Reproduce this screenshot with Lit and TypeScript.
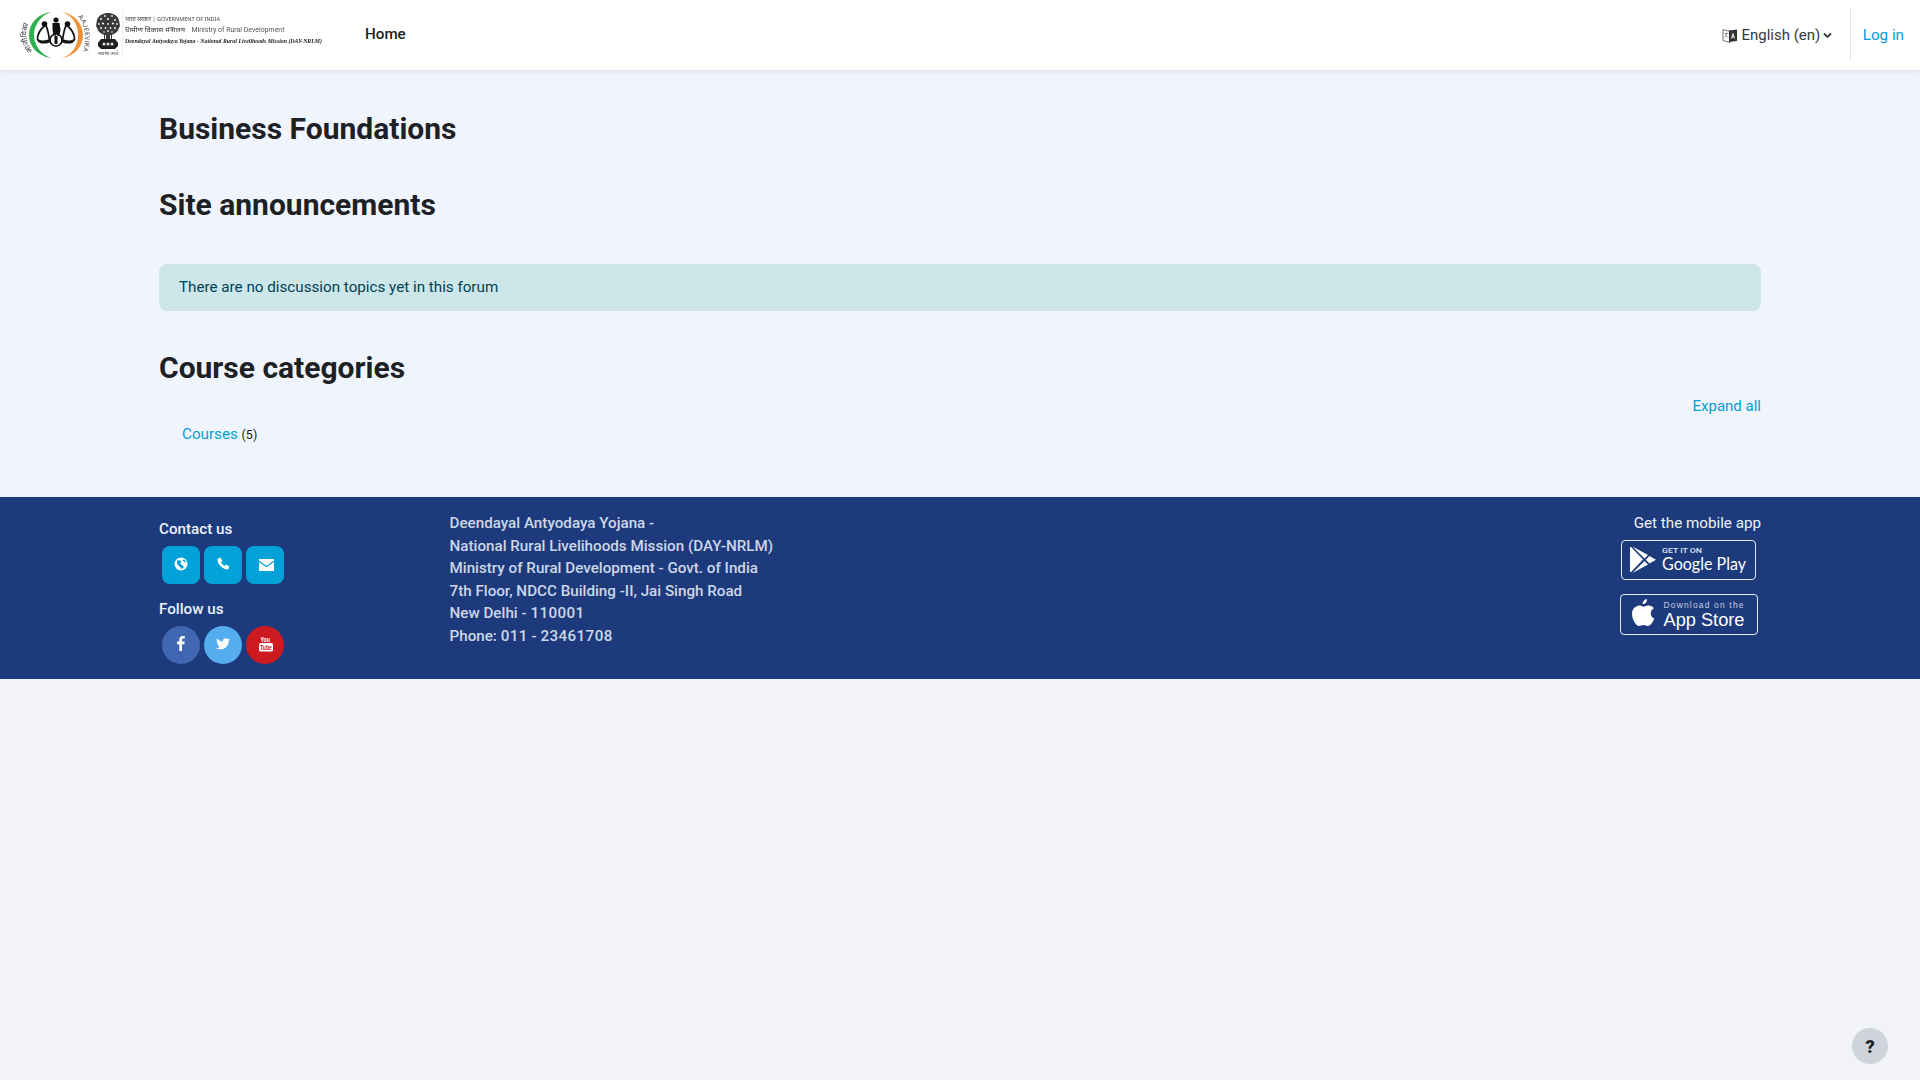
import { LitElement, html, css, svg } from "lit";
import { customElement } from "lit/decorators.js";

const logo = svg`<svg class="logo" width="330" height="70" viewBox="0 0 330 70">
  <defs>
    <path id="la" d="M33 51 C25 43 25 27 32 17" fill="none"/>
    <path id="ra" d="M78 17 C85 24 87 38 83 53" fill="none"/>
  </defs>
  <path d="M51 12 C37 14 29 24 29 35 C29 46 37 56 51 58 C42 55 34 46 34 35 C34 24 42 15 51 12z" fill="#2fb150"/>
  <path d="M62 12 C75 14 83 24 83 35 C83 46 75 56 62 58 C72 55 78 46 78 35 C78 24 72 15 62 12z" fill="#f0913a"/>
  <text font-family="'Noto Sans', Roboto, sans-serif" font-size="7.500" fill="#333"><textPath href="#la">आजीविका</textPath></text>
  <text font-family="Roboto, sans-serif" font-size="6.500" fill="#444" letter-spacing=".3"><textPath href="#ra">AAJEEVIKA</textPath></text>
  <g transform="translate(1.500 0)">
    <g fill="none" stroke="#111" stroke-width="1.700">
      <path d="M44 25c-5 4-8 9-8 14 0 3 6 3 12 1-1-5-1-10-4-15z"/>
      <path d="M65 25c5 4 8 9 8 14 0 3-6 3-12 1 1-5 1-10 4-15z"/>
      <circle cx="54.500" cy="40" r="6"/>
    </g>
    <g fill="#111">
      <circle cx="43" cy="24" r="2.800"/><circle cx="66" cy="24" r="2.800"/><circle cx="54.500" cy="20" r="2.600"/>
      <path d="M51 23h7l1 7-1 5-2 1-1-3-1 3-2-1-1-5z"/>
      <path d="M53 36h3v8h-3z"/>
      <path d="M37 39c3 3 7 3 11 1l1 2c-4 2-10 2-12 0zM72 39c-3 3-7 3-11 1l-1 2c4 2 10 2 12 0z"/>
    </g>
  </g>
  <g>
    <path d="M97 20c2-5 6-7 11-7s9 2 11 7l1 6-3 6-5 3v4h-8v-4l-5-3-3-6z" fill="#3a3a3a"/>
    <g fill="#eee">
      <circle cx="101" cy="19" r="1"/><circle cx="105" cy="16" r=".9"/><circle cx="108" cy="19" r="1.100"/><circle cx="112" cy="16" r=".9"/><circle cx="115" cy="20" r="1"/>
      <circle cx="99" cy="24" r=".9"/><circle cx="103" cy="23.500" r="1.100"/><circle cx="108" cy="24" r=".9"/><circle cx="113" cy="23.500" r="1.100"/><circle cx="117" cy="24" r=".9"/>
      <circle cx="101" cy="28" r="1"/><circle cx="105.500" cy="28" r=".9"/><circle cx="110.500" cy="28" r=".9"/><circle cx="115" cy="28" r="1"/><circle cx="108" cy="31" r="1"/><circle cx="104" cy="32" r=".8"/><circle cx="112" cy="32" r=".8"/>
      <path d="M105 35h1v4h-1zM110 35h1v4h-1z"/>
    </g>
    <path d="M101 39h14l3 4v3l-3 3H101l-3-3v-3z" fill="#1f1f1f"/>
    <circle cx="104" cy="44" r="1.500" fill="#ddd"/><circle cx="108" cy="44" r="1.500" fill="#ddd"/><circle cx="112" cy="44" r="1.500" fill="#ddd"/>
    <text x="98" y="55" font-family="'Noto Sans', sans-serif" font-size="4" fill="#444" textLength="20">सत्यमेव जयते</text>
  </g>
  <line x1="122.500" y1="10" x2="122.500" y2="58" stroke="#ececec" stroke-width=".8"/>
  <text x="125" y="21" font-family="'Noto Sans', sans-serif" font-size="6" fill="#444" textLength="95" lengthAdjust="spacingAndGlyphs">भारत सरकार | GOVERNMENT OF INDIA</text>
  <text x="125" y="32" font-family="'Noto Sans', sans-serif" font-size="7" fill="#333" textLength="60" lengthAdjust="spacingAndGlyphs">ग्रामीण विकास मंत्रालय</text>
  <text x="191.500" y="32" font-family="Roboto, sans-serif" font-size="7.500" fill="#555" textLength="93" lengthAdjust="spacingAndGlyphs">Ministry of Rural Development</text>
  <text x="125" y="42.500" font-family="'Liberation Serif', serif" font-style="italic" font-weight="700" font-size="7" fill="#222" textLength="197" lengthAdjust="spacingAndGlyphs">Deendayal Antyodaya Yojana - National Rural Livelihoods Mission (DAY-NRLM)</text>
</svg>`;

@customElement("app-root")
export class AppRoot extends LitElement {
  static styles = css`
    :host { display: block; min-height: 1080px; background: #f1f3f7; font-family: Roboto, "Liberation Sans", sans-serif; font-size: 15px; color: #1d2125; }
    a { color: #00a0d6; text-decoration: none; }
    .nav { height: 70px; background: #fff; display: flex; align-items: center; box-shadow: 0 2px 5px rgba(0,0,0,.075); position: relative; }
    .logo { flex: none; filter: blur(.3px); }
    .home { margin-left: 35px; margin-bottom: 2px; font-weight: 500; font-size: 15.2px; color: #1d2125; }
    .spacer { flex: 1; }
    .lang { display: flex; align-items: center; gap: 3px; color: #343a40; font-size: 15px; margin-right: 18px; }
    .divider { width: 1px; height: 52px; background: #dee2e6; }
    .login { margin: 0 16px 0 11.5px; font-size: 15.2px; }
    main { background: #f0f5fd; padding: 0 159px; height: 427px; box-sizing: border-box; display: flow-root; }
    h2 { margin: 0; font-size: 30px; line-height: 36px; font-weight: 700; color: #1d2125; }
    .t1 { margin-top: 41px; }
    .t2 { margin-top: 40px; }
    .alert { margin-top: 41px; height: 47px; box-sizing: border-box; background: #cce6ea; color: #004251; border-radius: 8px; padding: 0 20px 2px; display: flex; align-items: center; font-size: 15.2px; }
    .t3 { margin-top: 39px; }
    .expand { text-align: right; margin-top: 9px; font-size: 15px; line-height: 22px; }
    .course { margin-top: 5px; padding-left: 23px; line-height: 24px; font-size: 15.2px; }
    .course small { font-size: 12.5px; color: #1d2125; }
    footer { height: 182px; background: #1d3b7c; padding: 0 159px; box-sizing: border-box; color: #eef1f7; display: flex; }
    .c1 { width: 290.5px; padding-top: 21px; font-weight: 500; font-size: 15.2px; }
    .c1 .lbl { line-height: 22px; }
    .icons { display: flex; gap: 4px; margin: 6px 0 14px 3px; }
    .ic { width: 38px; height: 38px; border-radius: 8px; background: #00a2d8; display: flex; align-items: center; justify-content: center; padding-bottom: 3px; box-sizing: border-box; }
    .ic.round { border-radius: 50%; }
    .addr { padding-top: 15px; font-weight: 500; font-size: 15.2px; line-height: 22.6px; color: #cdd6e8; }
    .d { letter-spacing: .4px; }
    .app { margin-left: auto; display: flex; flex-direction: column; align-items: flex-end; padding-top: 15px; }
    .app .t { line-height: 22px; font-size: 15.2px; }
    .badge { display: block; }
    .b1 { margin-top: 6px; margin-right: 5px; }
    .b2 { margin-top: 14px; margin-right: 3.5px; }
    .help { position: fixed; right: 32px; bottom: 16px; width: 36px; height: 36px; border-radius: 50%; background: #ced4da; display: flex; align-items: center; justify-content: center; font-weight: 900; font-size: 18px; color: #1d2125; }
  `;

  render() {
    return html`
      <div class="nav">
        ${logo}
        <a class="home" href="#">Home</a>
        <div class="spacer"></div>
        <div class="lang">
          <svg width="16" height="17" viewBox="0 0 16 17"><path d="M1 2.500 8 4.500V15.500L1 13.500z" fill="#fff" stroke="#666" stroke-width=".9"/><path d="M7 3.500 15 2.500V14L7 15z" fill="#333"/><path d="M9.500 11.500 11 6.500 12.500 11.500M10 10h2" stroke="#fff" stroke-width=".9" fill="none"/><path d="M2.500 6.500h4M4.500 5.500c0 3-1 4-2 5M3.500 8c.5 1 1.500 2 3 2.500" stroke="#666" stroke-width=".7" fill="none"/></svg>
          <span>English ‎(en)‎</span>
          <svg width="9" height="7" viewBox="0 0 9 7"><path d="M1 1.500 4.500 5 8 1.500" fill="none" stroke="#343a40" stroke-width="1.800"/></svg>
        </div>
        <div class="divider"></div>
        <a class="login" href="#">Log in</a>
      </div>
      <main>
        <h2 class="t1">Business Foundations</h2>
        <h2 class="t2">Site announcements</h2>
        <div class="alert">There are no discussion topics yet in this forum</div>
        <h2 class="t3">Course categories</h2>
        <div class="expand"><a href="#">Expand all</a></div>
        <div class="course"><a href="#">Courses</a> <small>(5)</small></div>
      </main>
      <footer>
        <div class="c1">
          <div class="lbl">Contact us</div>
          <div class="icons">
            <span class="ic"><svg width="14" height="14" viewBox="0 0 14 14"><circle cx="7" cy="7" r="6.500" fill="#fff"/><path d="M3 3.500c1.500-.5 3-.5 4 .5s-1 2-.5 3 2.500 1 3 2.500-1 2.500-2 2.500c0-1.500-2-2-3-3.500S2.500 6 3 3.500zM9 2.500c1.500 0 3 1.500 3 3-1 0-2-.5-3-1.500z" fill="#00a2d8"/></svg></span>
            <span class="ic"><svg width="13" height="13" viewBox="0 0 13 13"><path d="M1 1.500 3.500.5 5.300 3.800 4 5.300c.7 1.500 2 2.800 3.600 3.600l1.400-1.400 3.400 1.900-1 2.500c-.5.7-2 .7-3.500.2C4.500 10.800 1.800 8 .7 4.800.3 3.500.4 2 1 1.500z" fill="#fff"/></svg></span>
            <span class="ic" style="padding:0 0 1px 3px"><svg width="15" height="12" viewBox="0 0 15 12"><path d="M0 0h15v1.500L7.500 6.800 0 1.500zM0 3l7.500 5.200L15 3v9H0z" fill="#fff"/></svg></span>
          </div>
          <div class="lbl">Follow us</div>
          <div class="icons">
            <span class="ic round" style="background:#4267b2"><svg width="8" height="15" viewBox="0 0 8 15"><path d="M2.300 15V8.300H0V5.600h2.300V3.700C2.300 1.400 3.700 0 5.800 0c.9 0 1.700.1 2 .1v2.400H6.400c-1.100 0-1.400.6-1.400 1.300v1.800h2.700l-.4 2.700H5V15z" fill="#fff"/></svg></span>
            <span class="ic round" style="background:#55acee"><svg width="14" height="12" viewBox="0 0 14 12"><path d="M14 1.500c-.5.300-1 .4-1.600.5.600-.4 1-.9 1.200-1.600-.5.300-1.100.6-1.800.7A2.900 2.900 0 0 0 6.900 3.300C4.500 3.200 2.400 2 1 .4.200 1.700.6 3.400 1.900 4.200c-.5 0-.9-.1-1.300-.4 0 1.400 1 2.600 2.300 2.900-.4.100-.8.100-1.300 0 .4 1.200 1.400 2 2.700 2A5.800 5.800 0 0 1 0 10c1.300.8 2.800 1.300 4.400 1.300 5.400 0 8.400-4.500 8.200-8.500.6-.4 1-.8 1.400-1.300z" fill="#fff"/></svg></span>
            <span class="ic round" style="background:#cd1a20;padding-left:2px"><svg width="14" height="17" viewBox="0 0 14 17"><text x="1.500" y="6.500" font-family="'Liberation Sans', sans-serif" font-size="7" font-weight="700" fill="#fff" textLength="9.500" lengthAdjust="spacingAndGlyphs">You</text><rect y="8" width="14" height="8.500" rx="1.500" fill="#fff"/><text x="1" y="14.800" font-family="'Liberation Sans', sans-serif" font-size="6.500" font-weight="700" fill="#cd1a20" textLength="12" lengthAdjust="spacingAndGlyphs">Tube</text></svg></span>
          </div>
        </div>
        <div class="addr">
          Deendayal Antyodaya Yojana -<br>
          National Rural Livelihoods Mission (DAY-NRLM)<br>
          Ministry of Rural Development - Govt. of India<br>
          7th Floor, NDCC Building -II, Jai Singh Road<br>
          New Delhi - <span class="d">110001</span><br>
          Phone: <span class="d">011</span> - <span class="d">23461708</span>
        </div>
        <div class="app">
          <div class="t">Get the mobile app</div>
          <svg class="badge b1" width="135" height="40" viewBox="0 0 135 40">
            <rect x=".5" y=".5" width="134" height="39" rx="3.500" fill="none" stroke="#e8ecf4"/>
            <path d="M9 7 10 7 22 19.500 10 32 9 32z" fill="#fff"/><path d="M11.500 6.500 27 15 23.500 18.500zM11.500 33 27 24.500 23.500 21zM28.500 16 35 19.800 28.500 23.500 24.800 19.800z" fill="#fff"/>
            <text x="41" y="13" font-family="Roboto, sans-serif" font-size="8" font-weight="500" fill="#dfe4ef" textLength="40" lengthAdjust="spacingAndGlyphs">GET IT ON</text>
            <text x="41" y="30" font-family="Lato, Roboto, sans-serif" font-size="18" fill="#fff" textLength="84" lengthAdjust="spacingAndGlyphs">Google Play</text>
          </svg>
          <svg class="badge b2" width="138" height="41" viewBox="0 0 138 41">
            <rect x=".5" y=".5" width="137" height="40" rx="3.500" fill="none" stroke="#e8ecf4"/>
            <path d="M27 5c-2.300.3-4.500 2.400-4.300 5.200 2.500.1 4.500-2.300 4.300-5.200zM19.500 11.500c-3.800.2-7.500 3.300-7.500 8.200 0 5.500 4 12.300 7 12.300 1.900 0 2.600-1 4.500-1s2.500 1 4.400 1c2.500 0 5.200-4 6.400-7.400-4.400-1.900-4.800-8.200-.4-10.300-1.300-1.900-3.500-2.800-5.600-2.700-1.900 0-3.400 1.100-4.700 1.100s-2.200-1.300-4.100-1.200z" fill="#fff"/>
            <text x="43.500" y="14" font-family="'Liberation Sans', sans-serif" font-size="8.500" fill="#c3cde0" textLength="80">Download on the</text>
            <text x="43.500" y="31.500" font-family="'Liberation Sans', sans-serif" font-size="18" fill="#fff" textLength="81" lengthAdjust="spacingAndGlyphs">App Store</text>
          </svg>
        </div>
      </footer>
      <div class="help">?</div>
    `;
  }
}
